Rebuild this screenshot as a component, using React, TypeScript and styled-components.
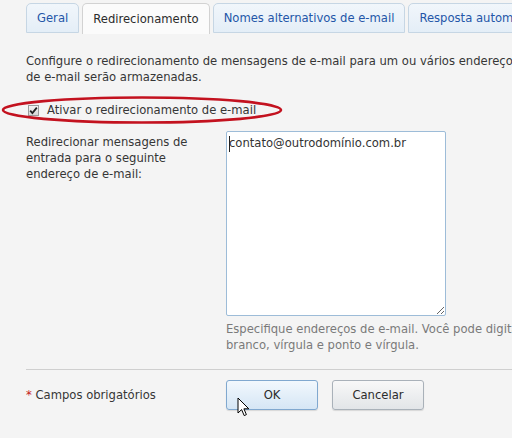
import React from 'react';
import styled, { createGlobalStyle } from 'styled-components';

const GlobalStyle = createGlobalStyle`
  html, body {
    margin: 0;
    padding: 0;
    overflow: hidden;
    background: #f4f4f4;
  }
  body {
    font-family: 'DejaVu Sans', Verdana, sans-serif;
    font-size: 11.6px;
    color: #363636;
  }
`;

const Page = styled.div`
  position: relative;
  width: 512px;
  height: 438px;
  overflow: hidden;
  padding-left: 26px;
  box-sizing: border-box;
`;

const TabBar = styled.div`
  display: flex;
  align-items: flex-end;
  gap: 3px;
  height: 33px;
  white-space: nowrap;
`;

const Tab = styled.div<{ $active?: boolean }>`
  flex: none;
  height: ${(p) => (p.$active ? 31 : 30)}px;
  box-sizing: border-box;
  padding: 0 10px;
  display: flex;
  align-items: center;
  border: 1px solid ${(p) => (p.$active ? '#d2d2d2' : '#c6d6e4')};
  border-bottom: ${(p) => (p.$active ? 'none' : '1px solid #c6d6e4')};
  border-radius: 5px 5px 0 0;
  background: ${(p) =>
    p.$active ? '#fbfbfb' : 'linear-gradient(#f1f6fb, #e4eef7)'};
  color: ${(p) => (p.$active ? '#2b2b2b' : '#2456a8')};
  margin-bottom: ${(p) => (p.$active ? -1 : 0)}px;
`;

const Intro = styled.p`
  margin: 20px 0 0;
  line-height: 16px;
  white-space: nowrap;
`;

const CheckRow = styled.label`
  position: relative;
  display: flex;
  align-items: center;
  gap: 8px;
  height: 16px;
  margin-top: 17px;
  padding-left: 2px;
`;

const CheckBox = styled.span`
  width: 9px;
  height: 9px;
  border: 1px solid #9a9a9a;
  background: linear-gradient(#f4f4f4, #d8d8d8);
  display: flex;
  align-items: center;
  justify-content: center;
`;

const Ring = styled.svg`
  position: absolute;
  left: -26px;
  top: -8px;
  pointer-events: none;
`;

const FormRow = styled.div`
  display: flex;
  margin-top: 13px;
`;

const FieldLabel = styled.div`
  width: 200px;
  flex: none;
  padding-top: 3px;
  line-height: 16px;
`;

const FieldColumn = styled.div`
  display: flex;
  flex-direction: column;
`;

const TextArea = styled.div`
  position: relative;
`;

const TextBox = styled.textarea`
  display: block;
  width: 220px;
  height: 185px;
  box-sizing: border-box;
  border: 1px solid #9dbcd8;
  border-radius: 2px;
  background: #fff;
  padding: 4px 2px;
  font-family: 'DejaVu Sans', Verdana, sans-serif;
  font-size: 11.6px;
  color: #333;
  resize: both;
  outline: none;
`;

const Caret = styled.span`
  position: absolute;
  left: 235px;
  top: 5px;
  width: 1px;
  height: 16px;
  background: #222;
`;

const Hint = styled.div`
  margin-top: 5px;
  line-height: 16px;
  color: #7a7a7a;
  white-space: nowrap;
`;

const Divider = styled.hr`
  border: none;
  border-top: 1px solid #cfcfcf;
  margin: 16px 0 0;
`;

const Footer = styled.div`
  display: flex;
  align-items: center;
  margin-top: 10px;
`;

const Required = styled.div`
  width: 200px;
  flex: none;
`;

const Star = styled.span`
  color: #c41a1a;
`;

const Buttons = styled.div`
  display: flex;
  gap: 14px;
`;

const Button = styled.button<{ $primary?: boolean }>`
  width: 92px;
  height: 30px;
  border-radius: 3px;
  font-family: 'DejaVu Sans', Verdana, sans-serif;
  font-size: 11.6px;
  color: #2b2b2b;
  border: 1px solid ${(p) => (p.$primary ? '#80a8cf' : '#a9b1b9')};
  background: ${(p) =>
    p.$primary
      ? 'linear-gradient(#f2f8fd, #d5e6f5)'
      : 'linear-gradient(#f8f8f8, #e2e5e8)'};
  box-shadow: 0 1px 1px rgba(0, 0, 0, 0.12);
`;

const Pointer = styled.svg`
  position: absolute;
  left: 237px;
  top: 397px;
  pointer-events: none;
`;

export default function App() {
  return (
    <>
      <GlobalStyle />
      <Page>
        <TabBar>
          <Tab>Geral</Tab>
          <Tab $active>Redirecionamento</Tab>
          <Tab>Nomes alternativos de e-mail</Tab>
          <Tab>Resposta automática</Tab>
        </TabBar>

        <Intro>
          Configure o redirecionamento de mensagens de e-mail para um ou vários endereços. As cópias das mensagens
          <br />
          de e-mail serão armazenadas.
        </Intro>

        <CheckRow>
          <CheckBox>
            <svg width="9" height="9" viewBox="0 0 9 9">
              <path d="M1.2 4.6 L3.4 7 L7.8 1.6" fill="none" stroke="#222" strokeWidth="1.8" />
            </svg>
          </CheckBox>
          Ativar o redirecionamento de e-mail
          <Ring width="290" height="32" viewBox="0 0 290 32">
            <ellipse cx="142" cy="16" rx="139" ry="12.5" fill="none" stroke="#c3121f" strokeWidth="2.6" />
          </Ring>
        </CheckRow>

        <FormRow>
          <FieldLabel>
            Redirecionar mensagens de
            <br />
            entrada para o seguinte
            <br />
            endereço de e-mail:
          </FieldLabel>
          <FieldColumn>
            <TextArea>
              <TextBox defaultValue="contato@outrodomínio.com.br" />
              <Caret style={{ left: 3 }} />
            </TextArea>
            <Hint>
              Especifique endereços de e-mail. Você pode digitar vários endereços separados por espaço em
              <br />
              branco, vírgula e ponto e vírgula.
            </Hint>
          </FieldColumn>
        </FormRow>

        <Divider />

        <Footer>
          <Required>
            <Star>*</Star> Campos obrigatórios
          </Required>
          <Buttons>
            <Button $primary>OK</Button>
            <Button>Cancelar</Button>
          </Buttons>
        </Footer>

        <Pointer width="13" height="21" viewBox="0 0 13 21">
          <path
            d="M1 1 L1 16 L4.6 12.6 L7.2 18.6 L9.4 17.6 L6.9 11.8 L11.8 11.8 Z"
            fill="#fff"
            stroke="#000"
            strokeWidth="1"
            strokeLinejoin="miter"
          />
        </Pointer>
      </Page>
    </>
  );
}
